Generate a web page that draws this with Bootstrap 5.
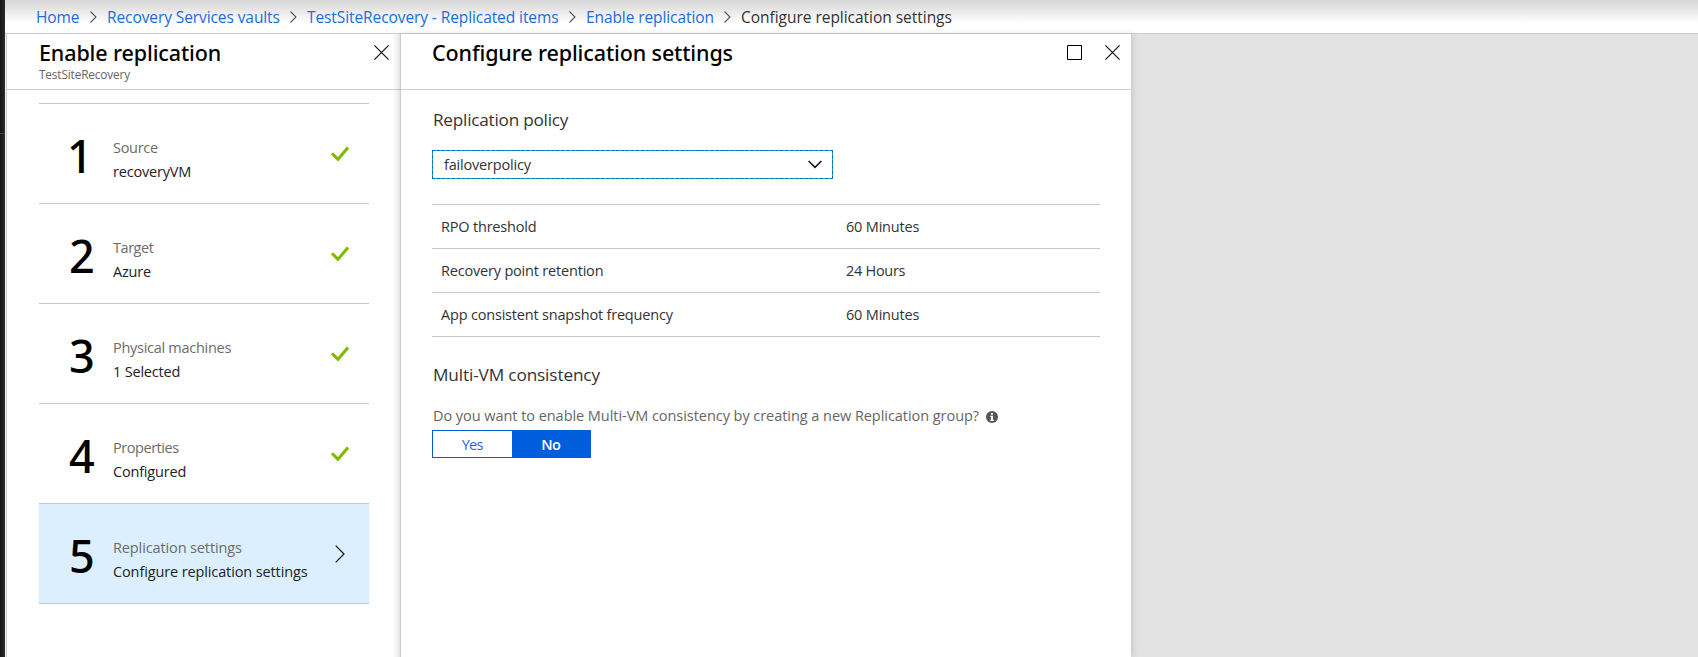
<!DOCTYPE html>
<html lang="en">
<head>
<meta charset="utf-8">
<title>Configure replication settings</title>
<link href="https://cdn.jsdelivr.net/npm/bootstrap@5.3.0/dist/css/bootstrap.min.css" rel="stylesheet">
<style>
body{font-family:"Open Sans","Noto Sans",sans-serif;font-size:14.5px;color:#333;background:#e3e3e3;height:657px;overflow:hidden;letter-spacing:-.19px}
a{text-decoration:none;color:#1a6ce0}
svg{display:block;flex:none}
.rail{width:5px;background:linear-gradient(90deg,#161616,#2b2a27)}
.rail-top{height:134px;border-bottom:1px solid #444}
.crumbs{height:33px;padding:2px 0 0 31px;font-size:15.5px;line-height:31px;background:linear-gradient(#d6d6d6,#e3e3e3 8px,#fff 23px);letter-spacing:-.09px}
.crumbs>a,.crumbs>span{flex:none}
.crumbs svg{margin-top:-2px}
.c1{width:54px}.c2{width:183px}.c3{width:262px}.c4{width:138px}
.chev{width:17px}
.crumb-now{letter-spacing:-.03px}
.blades{border-top:1px solid #ccc}
.blade{background:#fff}
.steps-blade{width:394px;border-left:1px solid #ccc;margin-left:1px;box-shadow:-1px 0 0 #f4f4f4}
.steps-blade::after{content:"";position:absolute;top:0;right:0;bottom:0;width:7px;background:linear-gradient(90deg,rgba(0,0,0,0),rgba(0,0,0,.1));pointer-events:none}
.settings-blade{width:731px;border-left:1px solid #ccc;box-shadow:2px 0 6px rgba(0,0,0,.12)}
.blade-head{height:56px;border-bottom:1px solid #d0d0d0;padding:5px 11px 0 32px}
.settings-blade .blade-head{padding-left:31px}
.blade-title{font:500 21.5px/28px "Noto Sans",sans-serif;color:#000;margin:0;letter-spacing:-.12px}
.blade-sub{font-size:11.8px;line-height:15px;color:#666;letter-spacing:-.13px}
.head-icons{padding-top:6px;gap:23px}
.steps{margin:13px 31px 0 32px;border-bottom:1px solid #c8c8c8}
.step{height:100px;border-top:1px solid #c8c8c8}
.step.current{background:#dcefff}
.num{width:74px;padding:29px 0 0 30px;font:500 45px/45px "Noto Sans",sans-serif;color:#000;letter-spacing:-1px}
.num-one{padding-left:28px}
.txt{padding-top:32px;line-height:24px;color:#222}
.txt .cap{color:#6b6b6b}
.mark-ok{margin:42px 20px 0 0}
.mark-go{margin:41px 24px 0 0}
.settings-body{padding:18px 31px 0 31px}
.sect{font-size:17.2px;line-height:24px;font-weight:400;margin:0;padding-left:1px;letter-spacing:-.24px}
.dropdown-box{width:401px;height:29px;margin-top:18px;border:1px solid #00b4f0;padding:0 10px 0 11px;background:#fff;position:relative}
.dropdown-box::after{content:"";position:absolute;inset:-1px;border:1px dashed #1766a5}
.facts{margin-top:25px;border-bottom:1px solid #c8c8c8}
.fact{height:44px;border-top:1px solid #c8c8c8;padding-left:9px}
.fact-name{width:405px}
.multi{margin-top:26px;letter-spacing:-.13px}
.ask{margin-top:19px;line-height:20px;padding-left:1px;color:#666;gap:7px;letter-spacing:-.05px}
.ask svg{margin-top:2px}
.toggle{width:159px;height:28px;margin-top:4px;border:1px solid #005ddb}
.toggle span{width:50%;line-height:27px;text-align:center;color:#1a6ce0}
.toggle .on{background:#005ddb;color:#fff;font-weight:600}
.t3{letter-spacing:-.28px}.t4{letter-spacing:-.45px}.t1{letter-spacing:-.12px}.t7{letter-spacing:-.65px}
</style>
</head>
<body class="d-flex">
<div class="rail flex-shrink-0"><div class="rail-top"></div></div>
<div class="d-flex flex-column flex-grow-1">
  <nav class="crumbs d-flex align-items-center flex-shrink-0">
    <a href="#" class="c1">Home</a>
    <svg class="chev" width="17" height="14" viewBox="0 0 17 14" fill="none" stroke="#555" stroke-width="1.1"><path d="M.5 1.5 6 7 .5 12.5"/></svg>
    <a href="#" class="c2">Recovery Services vaults</a>
    <svg class="chev" width="17" height="14" viewBox="0 0 17 14" fill="none" stroke="#555" stroke-width="1.1"><path d="M.5 1.5 6 7 .5 12.5"/></svg>
    <a href="#" class="c3">TestSiteRecovery - Replicated items</a>
    <svg class="chev" width="17" height="14" viewBox="0 0 17 14" fill="none" stroke="#555" stroke-width="1.1"><path d="M.5 1.5 6 7 .5 12.5"/></svg>
    <a href="#" class="c4">Enable replication</a>
    <svg class="chev" width="17" height="14" viewBox="0 0 17 14" fill="none" stroke="#555" stroke-width="1.1"><path d="M.5 1.5 6 7 .5 12.5"/></svg>
    <span class="crumb-now">Configure replication settings</span>
  </nav>
  <main class="blades d-flex flex-grow-1">
    <section class="blade steps-blade position-relative flex-shrink-0">
      <header class="blade-head d-flex justify-content-between">
        <div><h1 class="blade-title">Enable replication</h1><div class="blade-sub">TestSiteRecovery</div></div>
        <div class="head-icons"><svg width="15" height="15" viewBox="0 0 15 15" stroke="#111" stroke-width="1.2"><path d="M.4.4l14.2 14.2M14.6.4.4 14.6"/></svg></div>
      </header>
      <div class="steps">
        <div class="step d-flex"><div class="num num-one">1</div><div class="txt flex-grow-1"><div class="cap t3">Source</div><div>recoveryVM</div></div>
          <svg class="mark-ok" width="18" height="16" viewBox="0 0 18 16" fill="none" stroke="#7fba00" stroke-width="3"><path d="M1 7.300l6 6L17 1.5"/></svg></div>
        <div class="step d-flex"><div class="num">2</div><div class="txt flex-grow-1"><div class="cap t4">Target</div><div>Azure</div></div>
          <svg class="mark-ok" width="18" height="16" viewBox="0 0 18 16" fill="none" stroke="#7fba00" stroke-width="3"><path d="M1 7.300l6 6L17 1.5"/></svg></div>
        <div class="step d-flex"><div class="num">3</div><div class="txt flex-grow-1"><div class="cap t3">Physical machines</div><div>1 Selected</div></div>
          <svg class="mark-ok" width="18" height="16" viewBox="0 0 18 16" fill="none" stroke="#7fba00" stroke-width="3"><path d="M1 7.300l6 6L17 1.5"/></svg></div>
        <div class="step d-flex"><div class="num">4</div><div class="txt flex-grow-1"><div class="cap t4">Properties</div><div>Configured</div></div>
          <svg class="mark-ok" width="18" height="16" viewBox="0 0 18 16" fill="none" stroke="#7fba00" stroke-width="3"><path d="M1 7.300l6 6L17 1.5"/></svg></div>
        <div class="step current d-flex"><div class="num">5</div><div class="txt flex-grow-1 text-nowrap t1"><div class="cap">Replication settings</div><div>Configure replication settings</div></div>
          <svg class="mark-go" width="10" height="18" viewBox="0 0 10 18" fill="none" stroke="#111" stroke-width="1.2"><path d="M.7.7 9 9 .7 17.3"/></svg></div>
      </div>
    </section>
    <section class="blade settings-blade flex-shrink-0">
      <header class="blade-head d-flex justify-content-between">
        <h2 class="blade-title">Configure replication settings</h2>
        <div class="head-icons d-flex">
          <svg width="15" height="15" viewBox="0 0 15 15" fill="none" stroke="#000"><path d="M.5.5h14v14H.5z"/></svg>
          <svg width="15" height="15" viewBox="0 0 15 15" stroke="#111" stroke-width="1.2"><path d="M.4.4l14.2 14.2M14.6.4.4 14.6"/></svg>
        </div>
      </header>
      <div class="settings-body">
        <h3 class="sect">Replication policy</h3>
        <div class="dropdown-box d-flex align-items-center justify-content-between"><span>failoverpolicy</span>
          <svg width="14" height="9" viewBox="0 0 14 9" fill="none" stroke="#111" stroke-width="1.5"><path d="M.6 1 7 7.400 13.4 1"/></svg></div>
        <div class="facts">
          <div class="fact d-flex align-items-center"><span class="fact-name">RPO threshold</span><span>60 Minutes</span></div>
          <div class="fact d-flex align-items-center"><span class="fact-name">Recovery point retention</span><span class="t3">24 Hours</span></div>
          <div class="fact d-flex align-items-center"><span class="fact-name">App consistent snapshot frequency</span><span>60 Minutes</span></div>
        </div>
        <h3 class="sect multi">Multi-VM consistency</h3>
        <div class="ask d-flex align-items-center"><span>Do you want to enable Multi-VM consistency by creating a new Replication group?</span>
          <svg width="12" height="12" viewBox="0 0 12 12"><circle cx="6" cy="6" r="6" fill="#555"/><path fill="#fff" d="M5 2h2v1.700H5zM4.200 4.700H7v4h.9V10H4.200V8.700H5V6h-.8z"/></svg></div>
        <div class="toggle d-flex"><span class="t7">Yes</span><span class="on t7">No</span></div>
      </div>
    </section>
  </main>
</div>
<script src="https://cdn.jsdelivr.net/npm/bootstrap@5.3.0/dist/js/bootstrap.bundle.min.js"></script>
</body>
</html>
